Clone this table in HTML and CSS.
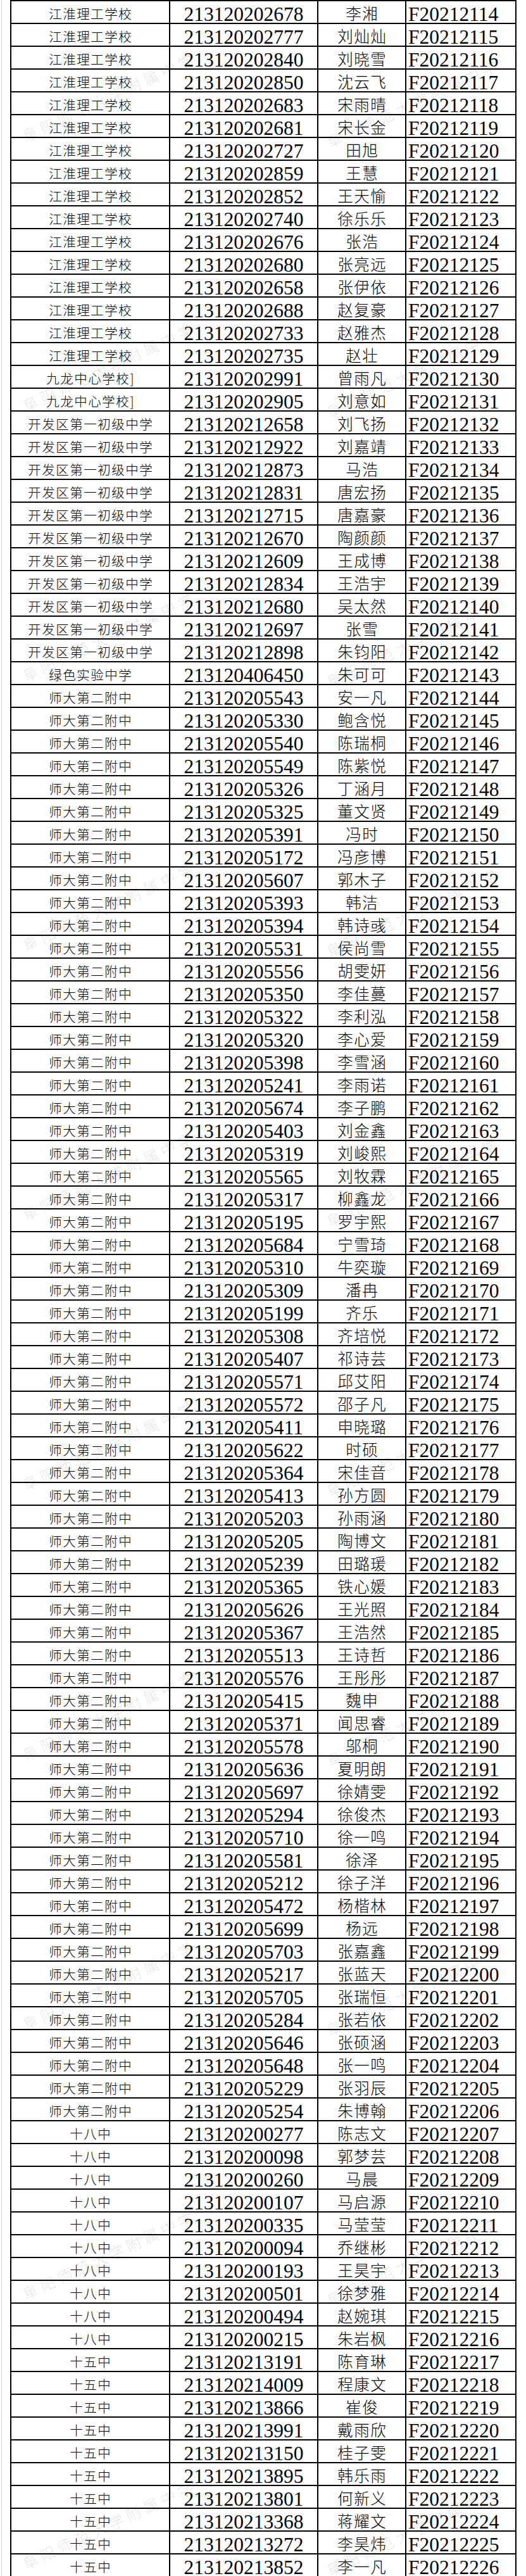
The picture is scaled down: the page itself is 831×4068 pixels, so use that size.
FILE: index.html
```html
<!DOCTYPE html>
<html lang="zh-CN">
<head>
<meta charset="utf-8">
<title>名单</title>
<link rel="stylesheet" href="styles.css">
</head>
<body>
<div class="page">
<div class="sheet">
<div class="c school">江淮理工学校</div><div class="c id">213120202678</div><div class="c name">李湘</div><div class="c exam">F20212114</div>
<div class="c school">江淮理工学校</div><div class="c id">213120202777</div><div class="c name">刘灿灿</div><div class="c exam">F20212115</div>
<div class="c school">江淮理工学校</div><div class="c id">213120202840</div><div class="c name">刘晓雪</div><div class="c exam">F20212116</div>
<div class="c school">江淮理工学校</div><div class="c id">213120202850</div><div class="c name">沈云飞</div><div class="c exam">F20212117</div>
<div class="c school">江淮理工学校</div><div class="c id">213120202683</div><div class="c name">宋雨晴</div><div class="c exam">F20212118</div>
<div class="c school">江淮理工学校</div><div class="c id">213120202681</div><div class="c name">宋长金</div><div class="c exam">F20212119</div>
<div class="c school">江淮理工学校</div><div class="c id">213120202727</div><div class="c name">田旭</div><div class="c exam">F20212120</div>
<div class="c school">江淮理工学校</div><div class="c id">213120202859</div><div class="c name">王慧</div><div class="c exam">F20212121</div>
<div class="c school">江淮理工学校</div><div class="c id">213120202852</div><div class="c name">王天愉</div><div class="c exam">F20212122</div>
<div class="c school">江淮理工学校</div><div class="c id">213120202740</div><div class="c name">徐乐乐</div><div class="c exam">F20212123</div>
<div class="c school">江淮理工学校</div><div class="c id">213120202676</div><div class="c name">张浩</div><div class="c exam">F20212124</div>
<div class="c school">江淮理工学校</div><div class="c id">213120202680</div><div class="c name">张亮远</div><div class="c exam">F20212125</div>
<div class="c school">江淮理工学校</div><div class="c id">213120202658</div><div class="c name">张伊依</div><div class="c exam">F20212126</div>
<div class="c school">江淮理工学校</div><div class="c id">213120202688</div><div class="c name">赵复豪</div><div class="c exam">F20212127</div>
<div class="c school">江淮理工学校</div><div class="c id">213120202733</div><div class="c name">赵雅杰</div><div class="c exam">F20212128</div>
<div class="c school">江淮理工学校</div><div class="c id">213120202735</div><div class="c name">赵壮</div><div class="c exam">F20212129</div>
<div class="c school">九龙中心学校]</div><div class="c id">213120202991</div><div class="c name">曾雨凡</div><div class="c exam">F20212130</div>
<div class="c school">九龙中心学校]</div><div class="c id">213120202905</div><div class="c name">刘意如</div><div class="c exam">F20212131</div>
<div class="c school">开发区第一初级中学</div><div class="c id">213120212658</div><div class="c name">刘飞扬</div><div class="c exam">F20212132</div>
<div class="c school">开发区第一初级中学</div><div class="c id">213120212922</div><div class="c name">刘嘉靖</div><div class="c exam">F20212133</div>
<div class="c school">开发区第一初级中学</div><div class="c id">213120212873</div><div class="c name">马浩</div><div class="c exam">F20212134</div>
<div class="c school">开发区第一初级中学</div><div class="c id">213120212831</div><div class="c name">唐宏扬</div><div class="c exam">F20212135</div>
<div class="c school">开发区第一初级中学</div><div class="c id">213120212715</div><div class="c name">唐嘉豪</div><div class="c exam">F20212136</div>
<div class="c school">开发区第一初级中学</div><div class="c id">213120212670</div><div class="c name">陶颜颜</div><div class="c exam">F20212137</div>
<div class="c school">开发区第一初级中学</div><div class="c id">213120212609</div><div class="c name">王成博</div><div class="c exam">F20212138</div>
<div class="c school">开发区第一初级中学</div><div class="c id">213120212834</div><div class="c name">王浩宇</div><div class="c exam">F20212139</div>
<div class="c school">开发区第一初级中学</div><div class="c id">213120212680</div><div class="c name">吴太然</div><div class="c exam">F20212140</div>
<div class="c school">开发区第一初级中学</div><div class="c id">213120212697</div><div class="c name">张雪</div><div class="c exam">F20212141</div>
<div class="c school">开发区第一初级中学</div><div class="c id">213120212898</div><div class="c name">朱钧阳</div><div class="c exam">F20212142</div>
<div class="c school">绿色实验中学</div><div class="c id">213120406450</div><div class="c name">朱可可</div><div class="c exam">F20212143</div>
<div class="c school">师大第二附中</div><div class="c id">213120205543</div><div class="c name">安一凡</div><div class="c exam">F20212144</div>
<div class="c school">师大第二附中</div><div class="c id">213120205330</div><div class="c name">鲍含悦</div><div class="c exam">F20212145</div>
<div class="c school">师大第二附中</div><div class="c id">213120205540</div><div class="c name">陈瑞桐</div><div class="c exam">F20212146</div>
<div class="c school">师大第二附中</div><div class="c id">213120205549</div><div class="c name">陈紫悦</div><div class="c exam">F20212147</div>
<div class="c school">师大第二附中</div><div class="c id">213120205326</div><div class="c name">丁涵月</div><div class="c exam">F20212148</div>
<div class="c school">师大第二附中</div><div class="c id">213120205325</div><div class="c name">董文贤</div><div class="c exam">F20212149</div>
<div class="c school">师大第二附中</div><div class="c id">213120205391</div><div class="c name">冯时</div><div class="c exam">F20212150</div>
<div class="c school">师大第二附中</div><div class="c id">213120205172</div><div class="c name">冯彦博</div><div class="c exam">F20212151</div>
<div class="c school">师大第二附中</div><div class="c id">213120205607</div><div class="c name">郭木子</div><div class="c exam">F20212152</div>
<div class="c school">师大第二附中</div><div class="c id">213120205393</div><div class="c name">韩洁</div><div class="c exam">F20212153</div>
<div class="c school">师大第二附中</div><div class="c id">213120205394</div><div class="c name">韩诗彧</div><div class="c exam">F20212154</div>
<div class="c school">师大第二附中</div><div class="c id">213120205531</div><div class="c name">侯尚雪</div><div class="c exam">F20212155</div>
<div class="c school">师大第二附中</div><div class="c id">213120205556</div><div class="c name">胡雯妍</div><div class="c exam">F20212156</div>
<div class="c school">师大第二附中</div><div class="c id">213120205350</div><div class="c name">李佳蔓</div><div class="c exam">F20212157</div>
<div class="c school">师大第二附中</div><div class="c id">213120205322</div><div class="c name">李利泓</div><div class="c exam">F20212158</div>
<div class="c school">师大第二附中</div><div class="c id">213120205320</div><div class="c name">李心爱</div><div class="c exam">F20212159</div>
<div class="c school">师大第二附中</div><div class="c id">213120205398</div><div class="c name">李雪涵</div><div class="c exam">F20212160</div>
<div class="c school">师大第二附中</div><div class="c id">213120205241</div><div class="c name">李雨诺</div><div class="c exam">F20212161</div>
<div class="c school">师大第二附中</div><div class="c id">213120205674</div><div class="c name">李子鹏</div><div class="c exam">F20212162</div>
<div class="c school">师大第二附中</div><div class="c id">213120205403</div><div class="c name">刘金鑫</div><div class="c exam">F20212163</div>
<div class="c school">师大第二附中</div><div class="c id">213120205319</div><div class="c name">刘峻熙</div><div class="c exam">F20212164</div>
<div class="c school">师大第二附中</div><div class="c id">213120205565</div><div class="c name">刘牧霖</div><div class="c exam">F20212165</div>
<div class="c school">师大第二附中</div><div class="c id">213120205317</div><div class="c name">柳鑫龙</div><div class="c exam">F20212166</div>
<div class="c school">师大第二附中</div><div class="c id">213120205195</div><div class="c name">罗宇熙</div><div class="c exam">F20212167</div>
<div class="c school">师大第二附中</div><div class="c id">213120205684</div><div class="c name">宁雪琦</div><div class="c exam">F20212168</div>
<div class="c school">师大第二附中</div><div class="c id">213120205310</div><div class="c name">牛奕璇</div><div class="c exam">F20212169</div>
<div class="c school">师大第二附中</div><div class="c id">213120205309</div><div class="c name">潘冉</div><div class="c exam">F20212170</div>
<div class="c school">师大第二附中</div><div class="c id">213120205199</div><div class="c name">齐乐</div><div class="c exam">F20212171</div>
<div class="c school">师大第二附中</div><div class="c id">213120205308</div><div class="c name">齐培悦</div><div class="c exam">F20212172</div>
<div class="c school">师大第二附中</div><div class="c id">213120205407</div><div class="c name">祁诗芸</div><div class="c exam">F20212173</div>
<div class="c school">师大第二附中</div><div class="c id">213120205571</div><div class="c name">邱艾阳</div><div class="c exam">F20212174</div>
<div class="c school">师大第二附中</div><div class="c id">213120205572</div><div class="c name">邵子凡</div><div class="c exam">F20212175</div>
<div class="c school">师大第二附中</div><div class="c id">213120205411</div><div class="c name">申晓璐</div><div class="c exam">F20212176</div>
<div class="c school">师大第二附中</div><div class="c id">213120205622</div><div class="c name">时硕</div><div class="c exam">F20212177</div>
<div class="c school">师大第二附中</div><div class="c id">213120205364</div><div class="c name">宋佳音</div><div class="c exam">F20212178</div>
<div class="c school">师大第二附中</div><div class="c id">213120205413</div><div class="c name">孙方圆</div><div class="c exam">F20212179</div>
<div class="c school">师大第二附中</div><div class="c id">213120205203</div><div class="c name">孙雨涵</div><div class="c exam">F20212180</div>
<div class="c school">师大第二附中</div><div class="c id">213120205205</div><div class="c name">陶博文</div><div class="c exam">F20212181</div>
<div class="c school">师大第二附中</div><div class="c id">213120205239</div><div class="c name">田璐瑗</div><div class="c exam">F20212182</div>
<div class="c school">师大第二附中</div><div class="c id">213120205365</div><div class="c name">铁心媛</div><div class="c exam">F20212183</div>
<div class="c school">师大第二附中</div><div class="c id">213120205626</div><div class="c name">王光照</div><div class="c exam">F20212184</div>
<div class="c school">师大第二附中</div><div class="c id">213120205367</div><div class="c name">王浩然</div><div class="c exam">F20212185</div>
<div class="c school">师大第二附中</div><div class="c id">213120205513</div><div class="c name">王诗哲</div><div class="c exam">F20212186</div>
<div class="c school">师大第二附中</div><div class="c id">213120205576</div><div class="c name">王彤彤</div><div class="c exam">F20212187</div>
<div class="c school">师大第二附中</div><div class="c id">213120205415</div><div class="c name">魏申</div><div class="c exam">F20212188</div>
<div class="c school">师大第二附中</div><div class="c id">213120205371</div><div class="c name">闻思睿</div><div class="c exam">F20212189</div>
<div class="c school">师大第二附中</div><div class="c id">213120205578</div><div class="c name">邬桐</div><div class="c exam">F20212190</div>
<div class="c school">师大第二附中</div><div class="c id">213120205636</div><div class="c name">夏明朗</div><div class="c exam">F20212191</div>
<div class="c school">师大第二附中</div><div class="c id">213120205697</div><div class="c name">徐婧雯</div><div class="c exam">F20212192</div>
<div class="c school">师大第二附中</div><div class="c id">213120205294</div><div class="c name">徐俊杰</div><div class="c exam">F20212193</div>
<div class="c school">师大第二附中</div><div class="c id">213120205710</div><div class="c name">徐一鸣</div><div class="c exam">F20212194</div>
<div class="c school">师大第二附中</div><div class="c id">213120205581</div><div class="c name">徐泽</div><div class="c exam">F20212195</div>
<div class="c school">师大第二附中</div><div class="c id">213120205212</div><div class="c name">徐子洋</div><div class="c exam">F20212196</div>
<div class="c school">师大第二附中</div><div class="c id">213120205472</div><div class="c name">杨楷林</div><div class="c exam">F20212197</div>
<div class="c school">师大第二附中</div><div class="c id">213120205699</div><div class="c name">杨远</div><div class="c exam">F20212198</div>
<div class="c school">师大第二附中</div><div class="c id">213120205703</div><div class="c name">张嘉鑫</div><div class="c exam">F20212199</div>
<div class="c school">师大第二附中</div><div class="c id">213120205217</div><div class="c name">张蓝天</div><div class="c exam">F20212200</div>
<div class="c school">师大第二附中</div><div class="c id">213120205705</div><div class="c name">张瑞恒</div><div class="c exam">F20212201</div>
<div class="c school">师大第二附中</div><div class="c id">213120205284</div><div class="c name">张若依</div><div class="c exam">F20212202</div>
<div class="c school">师大第二附中</div><div class="c id">213120205646</div><div class="c name">张硕涵</div><div class="c exam">F20212203</div>
<div class="c school">师大第二附中</div><div class="c id">213120205648</div><div class="c name">张一鸣</div><div class="c exam">F20212204</div>
<div class="c school">师大第二附中</div><div class="c id">213120205229</div><div class="c name">张羽辰</div><div class="c exam">F20212205</div>
<div class="c school">师大第二附中</div><div class="c id">213120205254</div><div class="c name">朱博翰</div><div class="c exam">F20212206</div>
<div class="c school">十八中</div><div class="c id">213120200277</div><div class="c name">陈志文</div><div class="c exam">F20212207</div>
<div class="c school">十八中</div><div class="c id">213120200098</div><div class="c name">郭梦芸</div><div class="c exam">F20212208</div>
<div class="c school">十八中</div><div class="c id">213120200260</div><div class="c name">马晨</div><div class="c exam">F20212209</div>
<div class="c school">十八中</div><div class="c id">213120200107</div><div class="c name">马启源</div><div class="c exam">F20212210</div>
<div class="c school">十八中</div><div class="c id">213120200335</div><div class="c name">马莹莹</div><div class="c exam">F20212211</div>
<div class="c school">十八中</div><div class="c id">213120200094</div><div class="c name">乔继彬</div><div class="c exam">F20212212</div>
<div class="c school">十八中</div><div class="c id">213120200193</div><div class="c name">王昊宇</div><div class="c exam">F20212213</div>
<div class="c school">十八中</div><div class="c id">213120200501</div><div class="c name">徐梦雅</div><div class="c exam">F20212214</div>
<div class="c school">十八中</div><div class="c id">213120200494</div><div class="c name">赵婉琪</div><div class="c exam">F20212215</div>
<div class="c school">十八中</div><div class="c id">213120200215</div><div class="c name">朱岩枫</div><div class="c exam">F20212216</div>
<div class="c school">十五中</div><div class="c id">213120213191</div><div class="c name">陈育琳</div><div class="c exam">F20212217</div>
<div class="c school">十五中</div><div class="c id">213120214009</div><div class="c name">程康文</div><div class="c exam">F20212218</div>
<div class="c school">十五中</div><div class="c id">213120213866</div><div class="c name">崔俊</div><div class="c exam">F20212219</div>
<div class="c school">十五中</div><div class="c id">213120213991</div><div class="c name">戴雨欣</div><div class="c exam">F20212220</div>
<div class="c school">十五中</div><div class="c id">213120213150</div><div class="c name">桂子雯</div><div class="c exam">F20212221</div>
<div class="c school">十五中</div><div class="c id">213120213895</div><div class="c name">韩乐雨</div><div class="c exam">F20212222</div>
<div class="c school">十五中</div><div class="c id">213120213801</div><div class="c name">何新义</div><div class="c exam">F20212223</div>
<div class="c school">十五中</div><div class="c id">213120213368</div><div class="c name">蒋耀文</div><div class="c exam">F20212224</div>
<div class="c school">十五中</div><div class="c id">213120213272</div><div class="c name">李昊炜</div><div class="c exam">F20212225</div>
<div class="c school">十五中</div><div class="c id">213120213852</div><div class="c name">李一凡</div><div class="c exam">F20212226</div>
</div>
<div class="wm-layer" aria-hidden="true">
<span class="wm">阜阳师范大学附属中学</span><span class="wm">阜阳师范大学附属中学</span>
<span class="wm">阜阳师范大学附属中学</span><span class="wm">阜阳师范大学附属中学</span>
<span class="wm">阜阳师范大学附属中学</span><span class="wm">阜阳师范大学附属中学</span>
<span class="wm">阜阳师范大学附属中学</span><span class="wm">阜阳师范大学附属中学</span>
<span class="wm">阜阳师范大学附属中学</span><span class="wm">阜阳师范大学附属中学</span>
<span class="wm">阜阳师范大学附属中学</span><span class="wm">阜阳师范大学附属中学</span>
<span class="wm">阜阳师范大学附属中学</span><span class="wm">阜阳师范大学附属中学</span>
<span class="wm">阜阳师范大学附属中学</span><span class="wm">阜阳师范大学附属中学</span>
<span class="wm">阜阳师范大学附属中学</span><span class="wm">阜阳师范大学附属中学</span>
<span class="wm">阜阳师范大学附属中学</span><span class="wm">阜阳师范大学附属中学</span>
</div>
</div>
</body>
</html>
```
FILE: styles.css
```css
* { box-sizing: border-box; }
html, body { margin: 0; padding: 0; background: #fff; }

.page {
  position: relative;
  margin-left: 2px;
  border-left: 1px solid #d4d4d4;
  padding-left: 13px;
  overflow: hidden;
}

.sheet {
  display: grid;
  grid-template-columns: 249px 232px 137px 172px;
  grid-auto-rows: 34px;
  gap: 2px;
  padding: 2px;
  width: 800px;
  background: #000;
}

.c {
  background: #fff;
  color: #000;
  white-space: nowrap;
  line-height: 34px;
}

.school {
  font-family: "Noto Sans CJK SC", sans-serif;
  font-weight: 300;
  font-size: 20.5px;
  letter-spacing: 1.5px;
  padding-left: 1.5px;
  padding-top: 2px;
  text-align: center;
}

.id {
  font-family: "Liberation Serif", serif;
  font-size: 31.5px;
  padding-top: 4px;
  text-align: center;
}

.name {
  font-family: "Noto Sans CJK SC", sans-serif;
  font-weight: 300;
  font-size: 24.5px;
  letter-spacing: 1.5px;
  padding-left: 1.5px;
  padding-top: 2px;
  text-align: center;
}

.exam {
  font-family: "Liberation Serif", serif;
  font-size: 31.5px;
  padding-top: 4px;
  padding-left: 3px;
  text-align: left;
}

.wm-layer {
  position: absolute;
  top: 203px;
  left: 34px;
  display: grid;
  grid-template-columns: 480px 480px;
  grid-auto-rows: 426px;
  pointer-events: none;
}

.wm {
  display: block;
  align-self: start;
  justify-self: start;
  font-family: "Noto Sans CJK SC", sans-serif;
  font-weight: 300;
  font-size: 24px;
  line-height: 26px;
  letter-spacing: 6px;
  color: rgba(0, 0, 0, 0.12);
  white-space: nowrap;
  transform: rotate(-25deg);
  transform-origin: 0 50%;
}

.wm:nth-child(even) { margin-top: 10px; }
```
